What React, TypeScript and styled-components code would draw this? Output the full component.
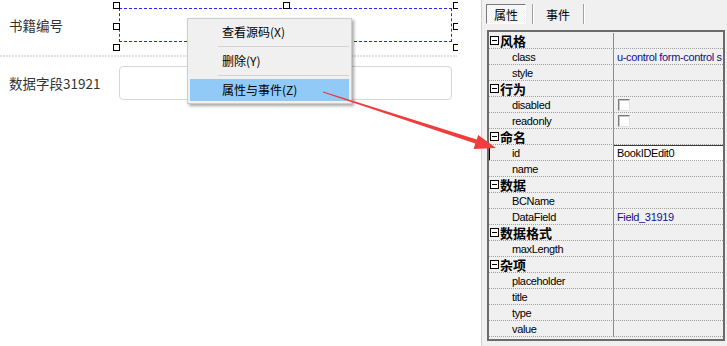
import React from "react";
import styled, { createGlobalStyle, css } from "styled-components";

const GlobalStyle = createGlobalStyle`
  html, body {
    margin: 0;
    padding: 0;
    background: #fff;
  }
  body {
    font-family: "Noto Sans CJK SC", "Noto Sans", sans-serif;
  }
`;

const Screen = styled.div`
  position: relative;
  display: flex;
  width: 727px;
  height: 346px;
  overflow: hidden;
  background: #fff;
`;

/* ---------- designer side ---------- */

const Designer = styled.div`
  flex: none;
  width: 481px;
  background: #fff;
`;

const Canvas = styled.div`
  position: relative;
  box-sizing: border-box;
  width: 458px;
  height: 100%;
  padding-top: 8px;
  overflow: hidden;
`;

const FormRow = styled.div<{ $gap?: number }>`
  display: flex;
  align-items: center;
  height: 34px;
  margin-top: ${(p) => p.$gap ?? 0}px;
`;

const Label = styled.div`
  box-sizing: border-box;
  width: 119px;
  padding-left: 9px;
  font-size: 13.5px;
  color: #333;
  white-space: nowrap;
`;

const Field = styled.div<{ $selected?: boolean }>`
  position: relative;
  box-sizing: border-box;
  width: 333px;
  height: 34px;
  ${(p) =>
    p.$selected
      ? css`
          border: 1px dashed #2424ff;
        `
      : css`
          border: 1px solid #d3d7de;
          border-radius: 4px;
        `}
`;

const Handle = styled.span<{ $x: number; $y: number }>`
  position: absolute;
  left: ${(p) => p.$x}px;
  top: ${(p) => p.$y}px;
  box-sizing: border-box;
  width: 7px;
  height: 7px;
  border: 1px solid #000;
  background: #fff;
`;

const Divider = styled.div`
  width: 457px;
  height: 2px;
  margin-top: 13px;
  background: repeating-linear-gradient(90deg, #e2e2e2 0 2px, transparent 2px 3px);
`;

const Menu = styled.ul`
  position: absolute;
  left: 187px;
  top: 18px;
  box-sizing: border-box;
  width: 165px;
  margin: 0;
  padding: 2px;
  list-style: none;
  background: #f0f0f0;
  border: 1px solid #cccccc;
  box-shadow: 2px 2px 3px rgba(0, 0, 0, 0.35);
  font-size: 12px;
  color: #000;
`;

const MenuItem = styled.li<{ $active?: boolean }>`
  height: 22px;
  line-height: 22px;
  padding-left: 32px;
  background: ${(p) => (p.$active ? "#91c9f7" : "transparent")};
`;

const MenuSeparator = styled.li`
  box-sizing: border-box;
  height: 7px;
  margin-left: 28px;
  padding-top: 3px;
  &::before {
    content: "";
    display: block;
    border-top: 1px solid #d2d2d2;
  }
`;

/* ---------- property panel ---------- */

const Panel = styled.aside`
  flex: none;
  width: 246px;
  min-width: 0;
  display: flex;
  flex-direction: column;
  box-sizing: border-box;
  background: #f0f0f0;
  border-left: 1px solid #d0d0d0;
  font-family: "Liberation Sans", "Noto Sans CJK SC", sans-serif;
  font-size: 11px;
  letter-spacing: -0.35px;
  color: #000;
`;

const TabBar = styled.div`
  display: flex;
  align-items: stretch;
  height: 20px;
  margin: 4px 0 0 4px;
  letter-spacing: 0;
`;

const Tab = styled.div<{ $width: number; $active?: boolean }>`
  box-sizing: border-box;
  width: ${(p) => p.$width}px;
  display: flex;
  align-items: center;
  justify-content: center;
  font-family: "Noto Sans CJK SC", sans-serif;
  font-size: 12px;
  ${(p) =>
    p.$active &&
    css`
      border-top: 1px solid #7a7a7a;
      border-left: 1px solid #7a7a7a;
      border-right: 1px solid #fff;
      border-bottom: 1px solid #fff;
      background-color: #f0f0f0;
      background-image: conic-gradient(#fff 25%, #f0f0f0 0 50%, #fff 0 75%, #f0f0f0 0);
      background-size: 2px 2px;
    `}
`;

const TabDivider = styled.span<{ $offset: number }>`
  width: 1px;
  margin-left: ${(p) => p.$offset}px;
  background: #a0a0a0;
  box-shadow: 1px 0 #fff;
`;

const Grid = styled.div`
  flex: 1;
  min-width: 0;
  display: flex;
  flex-direction: column;
  margin: 6px 2px 5px 5px;
  padding-top: 1px;
  border: 2px solid #6b6b6b;
  overflow: hidden;
`;

const Row = styled.div`
  display: flex;
  height: 16px;
  min-width: 0;
`;

const NameCell = styled.div<{ $header?: boolean; $current?: boolean }>`
  box-sizing: border-box;
  flex: none;
  width: 125px;
  display: flex;
  align-items: center;
  gap: 1px;
  padding-left: ${(p) => (p.$header ? 1 : 23)}px;
  border-right: 1px solid #8c8c8c;
  border-bottom: 1px dotted #a0a0a0;
  white-space: nowrap;
  ${(p) =>
    p.$header &&
    css`
      font-family: "Noto Sans CJK SC", sans-serif;
      font-size: 13px;
      font-weight: 700;
      letter-spacing: 0;
    `}
  ${(p) =>
    p.$current &&
    css`
      box-shadow: inset 1px 0 #000;
    `}
`;

const ValueCell = styled.div<{ $tone?: "link" | "edit" }>`
  box-sizing: border-box;
  flex: 1;
  min-width: 0;
  display: flex;
  align-items: center;
  padding-left: 3px;
  border-bottom: 1px dotted #a0a0a0;
  white-space: nowrap;
  overflow: hidden;
  color: ${(p) => (p.$tone === "link" ? "#10108c" : "#000")};
  ${(p) =>
    p.$tone === "edit" &&
    css`
      background: #fff;
      box-shadow: inset 0 1px #3c3c3c;
    `}
`;

const Collapse = styled.span`
  position: relative;
  flex: none;
  box-sizing: border-box;
  width: 9px;
  height: 9px;
  border: 1px solid #000;
  background: #fff;
  &::after {
    content: "";
    position: absolute;
    left: 1px;
    right: 1px;
    top: 3px;
    height: 1px;
    background: #000;
  }
`;

const Check = styled.span`
  flex: none;
  box-sizing: border-box;
  width: 12px;
  height: 12px;
  margin-left: 1px;
  background: #fff;
  border-top: 1px solid #7a7a7a;
  border-left: 1px solid #7a7a7a;
  border-right: 1px solid #e3e3e3;
  border-bottom: 1px solid #e3e3e3;
  box-shadow: inset 1px 1px #c8c8c8;
`;

const Overlay = styled.svg`
  position: absolute;
  left: 0;
  top: 0;
  pointer-events: none;
`;

type Prop = { name: string; value?: string; kind?: "link" | "check" | "edit" };
type Group = { title: string; items: Prop[] };

const groups: Group[] = [
  {
    title: "风格",
    items: [{ name: "class", value: "u-control form-control s", kind: "link" }, { name: "style" }],
  },
  { title: "行为", items: [{ name: "disabled", kind: "check" }, { name: "readonly", kind: "check" }] },
  { title: "命名", items: [{ name: "id", value: "BookIDEdit0", kind: "edit" }, { name: "name" }] },
  { title: "数据", items: [{ name: "BCName" }, { name: "DataField", value: "Field_31919", kind: "link" }] },
  { title: "数据格式", items: [{ name: "maxLength" }] },
  {
    title: "杂项",
    items: [{ name: "placeholder" }, { name: "title" }, { name: "type" }, { name: "value" }],
  },
];

const handles: [number, number][] = [
  [-7, -7],
  [-7, 14],
  [-7, 35],
  [163, -7],
  [333, -7],
  [333, 14],
  [333, 35],
];

// tapered annotation arrow from start to tip
function arrowPoints(sx: number, sy: number, tx: number, ty: number) {
  const len = Math.hypot(tx - sx, ty - sy);
  const ux = (tx - sx) / len;
  const uy = (ty - sy) / len;
  const nx = -uy;
  const ny = ux;
  const bx = tx - 21 * ux;
  const by = ty - 21 * uy;
  const pts: [number, number][] = [
    [sx - 0.5 * nx, sy - 0.5 * ny],
    [bx - 2.2 * nx, by - 2.2 * ny],
    [bx - 7 * nx, by - 7 * ny],
    [tx, ty],
    [bx + 8 * nx, by + 8 * ny],
    [bx + 2.2 * nx, by + 2.2 * ny],
    [sx + 0.5 * nx, sy + 0.5 * ny],
  ];
  return pts.map(([x, y]) => `${x.toFixed(1)},${y.toFixed(1)}`).join(" ");
}

export default function App() {
  return (
    <>
      <GlobalStyle />
      <Screen>
        <Designer>
          <Canvas>
            <FormRow>
              <Label>书籍编号</Label>
              <Field $selected>
                {handles.map(([x, y], i) => (
                  <Handle key={i} $x={x} $y={y} />
                ))}
              </Field>
            </FormRow>
            <Divider />
            <FormRow $gap={9}>
              <Label>数据字段31921</Label>
              <Field />
            </FormRow>

            <Menu>
              <MenuItem>查看源码(X)</MenuItem>
              <MenuSeparator />
              <MenuItem>删除(Y)</MenuItem>
              <MenuSeparator />
              <MenuItem $active>属性与事件(Z)</MenuItem>
            </Menu>
          </Canvas>
        </Designer>

        <Panel>
          <TabBar>
            <Tab $width={40} $active>
              属性
            </Tab>
            <TabDivider $offset={6} />
            <Tab $width={50}>事件</Tab>
            <TabDivider $offset={0} />
          </TabBar>
          <Grid>
            {groups.map((g) => (
              <React.Fragment key={g.title}>
                <Row>
                  <NameCell $header>
                    <Collapse />
                    {g.title}
                  </NameCell>
                  <ValueCell />
                </Row>
                {g.items.map((p) => (
                  <Row key={p.name}>
                    <NameCell $current={p.kind === "edit"}>{p.name}</NameCell>
                    <ValueCell $tone={p.kind === "link" ? "link" : p.kind === "edit" ? "edit" : undefined}>
                      {p.kind === "check" ? <Check /> : p.value}
                    </ValueCell>
                  </Row>
                ))}
              </React.Fragment>
            ))}
          </Grid>
        </Panel>

        <Overlay width={727} height={346} viewBox="0 0 727 346">
          <polygon points={arrowPoints(323, 92, 496, 148)} fill="#f03c3c" />
        </Overlay>
      </Screen>
    </>
  );
}
